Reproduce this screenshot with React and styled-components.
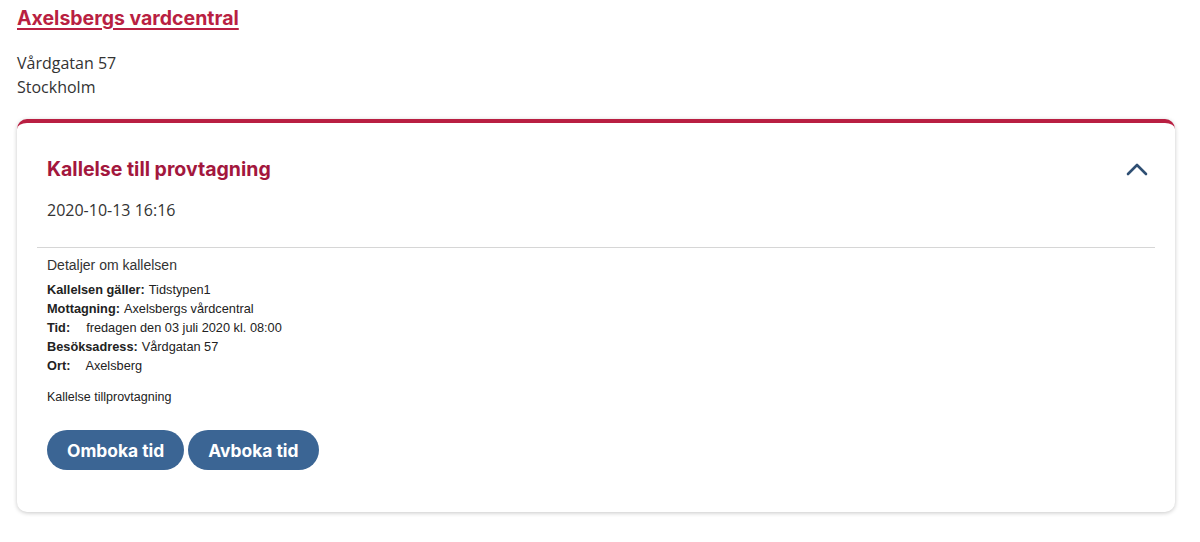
import React from "react";
import styled, { createGlobalStyle } from "styled-components";

const Global = createGlobalStyle`
  body {
    margin: 0;
    background: #ffffff;
    font-family: "Open Sans", "Liberation Sans", sans-serif;
  }
`;

const Page = styled.div`
  padding: 6px 25px 28px 17px;
`;

const ClinicLink = styled.a`
  display: inline-block;
  font-family: Inter, "Liberation Sans", sans-serif;
  font-weight: 700;
  font-size: 19.5px;
  line-height: 24px;
  color: #b91f42;
  text-decoration: underline;
  text-underline-offset: 3px;
  text-decoration-thickness: 2px;
  cursor: pointer;
`;

const Address = styled.div`
  margin-top: 21px;
  font-size: 16px;
  line-height: 24px;
  color: #333333;
`;

const Card = styled.section`
  margin-top: 20px;
  border-top: 4px solid #b91f42;
  border-radius: 10px;
  background: #ffffff;
  box-shadow: 0 1px 4px rgba(0, 0, 0, 0.22);
  padding: 0 20px 42px;
`;

const CardHead = styled.div`
  display: flex;
  justify-content: space-between;
  align-items: center;
  padding: 32px 10px 0;
`;

const CardTitle = styled.h2`
  margin: 0;
  font-family: Inter, "Liberation Sans", sans-serif;
  font-weight: 700;
  font-size: 19.5px;
  line-height: 28px;
  color: #a3173d;
`;

const Toggle = styled.button`
  border: none;
  background: none;
  padding: 0;
  display: flex;
  cursor: pointer;
  margin-right: -3px;
`;

const DateLine = styled.div`
  padding: 15px 10px 0;
  font-size: 16px;
  line-height: 24px;
  color: #333333;
`;

const Divider = styled.hr`
  margin: 25px 0 0;
  border: none;
  border-top: 1px solid #d6d6d6;
`;

const Details = styled.div`
  padding: 8px 10px 0;
  font-family: "Liberation Sans", Arial, sans-serif;
  font-size: 12.75px;
  color: #222222;
`;

const DetailsHeading = styled.div`
  font-size: 14px;
  line-height: 18px;
  color: #333333;
  margin-bottom: 6px;
`;

const Row = styled.div`
  line-height: 19px;
`;

const Label = styled.b`
  margin-right: ${(p) => p.$gap || 4}px;
`;

const Note = styled.div`
  margin-top: 13px;
  font-size: 12.5px;
  line-height: 18px;
`;

const Actions = styled.div`
  display: flex;
  gap: 4px;
  padding: 24px 10px 0;
`;

const PillButton = styled.button`
  height: 40px;
  padding: 0 20px;
  border: none;
  border-radius: 20px;
  background: #3b6594;
  color: #ffffff;
  font-family: Inter, "Liberation Sans", sans-serif;
  font-weight: 700;
  font-size: 17.4px;
  cursor: pointer;
`;

const ChevronUp = () => (
  <svg width="22" height="14" viewBox="0 0 22 14" fill="none">
    <path d="M2 12 L11 3 L20 12" stroke="#2f4f73" strokeWidth="2.6" strokeLinecap="round" strokeLinejoin="round" />
  </svg>
);

const details = [
  { label: "Kallelsen gäller:", value: "Tidstypen1" },
  { label: "Mottagning:", value: "Axelsbergs vårdcentral" },
  { label: "Tid:", value: "fredagen den 03 juli 2020 kl. 08:00", gap: 16 },
  { label: "Besöksadress:", value: "Vårdgatan 57" },
  { label: "Ort:", value: "Axelsberg", gap: 15 },
];

export default function App() {
  return (
    <>
      <Global />
      <Page>
        <ClinicLink>Axelsbergs vardcentral</ClinicLink>
        <Address>
          Vårdgatan 57
          <br />
          Stockholm
        </Address>
        <Card>
          <CardHead>
            <CardTitle>Kallelse till provtagning</CardTitle>
            <Toggle aria-label="Fäll ihop">
              <ChevronUp />
            </Toggle>
          </CardHead>
          <DateLine>2020-10-13 16:16</DateLine>
          <Divider />
          <Details>
            <DetailsHeading>Detaljer om kallelsen</DetailsHeading>
            {details.map((d) => (
              <Row key={d.label}>
                <Label $gap={d.gap}>{d.label}</Label>
                {d.value}
              </Row>
            ))}
            <Note>Kallelse tillprovtagning</Note>
          </Details>
          <Actions>
            <PillButton>Omboka tid</PillButton>
            <PillButton>Avboka tid</PillButton>
          </Actions>
        </Card>
      </Page>
    </>
  );
}
